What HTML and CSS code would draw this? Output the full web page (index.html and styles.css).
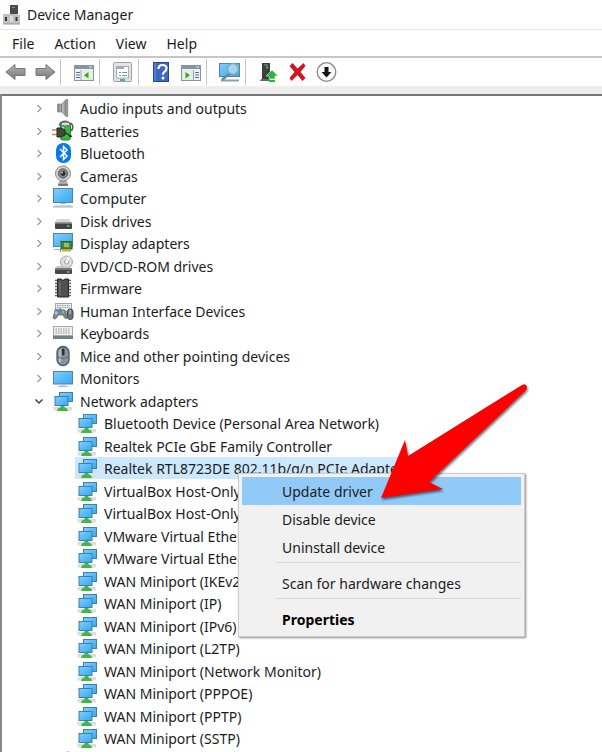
FILE: index.html
```html
<!DOCTYPE html>
<html lang="en">
<head>
<meta charset="utf-8">
<title>Device Manager</title>
<link rel="stylesheet" href="styles.css">
</head>
<body>
<svg class="sprite" aria-hidden="true">
  <defs>
    <linearGradient id="screen" x1="0" y1="0" x2="1" y2="1"><stop offset="0" stop-color="#7fd0fb"/><stop offset="1" stop-color="#38a6f1"/></linearGradient>
    <linearGradient id="cone" x1="0" y1="0" x2="1" y2="0"><stop offset="0" stop-color="#777"/><stop offset=".5" stop-color="#c8c8c8"/><stop offset="1" stop-color="#777"/></linearGradient>
    <linearGradient id="arrow" x1="0" y1="0" x2="0" y2="1"><stop offset="0" stop-color="#b5b5b5"/><stop offset="1" stop-color="#777"/></linearGradient>
  </defs>
  <symbol id="i-chevron" viewBox="0 0 20 22"><path d="M8.500 8l3.500 3.500-3.500 3.500" fill="none" stroke="#a0a0a0" stroke-width="1.400"/></symbol>
  <symbol id="i-open" viewBox="0 0 20 22"><path d="M6.500 9.500l3.500 3.500 3.500-3.500" fill="none" stroke="#404040" stroke-width="1.500"/></symbol>
  <symbol id="i-audio" viewBox="0 0 24 22"><path d="M6.500 7h4l5-5v18l-5-5h-4z" fill="url(#cone)" stroke="#888" stroke-width=".7"/><path d="M10.500 7v8" stroke="#777"/><path d="M16.500 2v18" stroke="#999" stroke-width="1.500"/></symbol>
  <symbol id="i-battery" viewBox="0 0 24 22"><path d="M9 6c-1-5 7-6 9-3 4 0 5 5 2 8" fill="none" stroke="#526052" stroke-width="1.600"/><rect x="9.500" y="3" width="10" height="17" rx="2.500" fill="#35b842" stroke="#278032"/><ellipse cx="14.500" cy="4" rx="4.500" ry="2" fill="#d8ddd8" stroke="#667"/><path d="M12 7v7" stroke="#a7eca4" stroke-width="2"/><path d="M1 10h6M1 14.500h6" stroke="#b29748" stroke-width="1.600"/><path d="M6 8h4l4 2v5l-4 2H6z" fill="#45453e" stroke="#222"/><path d="M14 13c5 0 3 5 7 3" fill="none" stroke="#333" stroke-width="1.500"/></symbol>
  <symbol id="i-bluetooth" viewBox="0 0 24 22"><rect x="5" y="1" width="15" height="20" rx="7" fill="#087ce5"/><path d="M9 7l7 7-3.500 3.500v-13L16 8l-7 7" fill="none" stroke="#fff" stroke-width="1.500"/></symbol>
  <symbol id="i-camera" viewBox="0 0 24 22"><path d="M9 15h6l2 4q0 2-5 2t-5-2z" fill="#a9a9a9"/><path d="M7 20h10" stroke="#666" stroke-width="1.500"/><circle cx="12" cy="8.500" r="7.500" fill="#d2d2d2" stroke="#888"/><circle cx="12" cy="8.500" r="4.700" fill="#858585" stroke="#606060"/><circle cx="12" cy="8.500" r="2.400" fill="#252a33"/><circle cx="11" cy="7.500" r="1" fill="#b6cde9"/></symbol>
  <symbol id="i-computer" viewBox="0 0 24 22"><rect x="2.500" y="1.500" width="19" height="14" fill="url(#screen)" stroke="#4c87a8"/><path d="M9 16h6v1H9z" fill="#9cc6dd"/><path d="M4 18h16l2 2H2z" fill="#cdd6dc"/><path d="M2 20h20" stroke="#a3b0b9"/></symbol>
  <symbol id="i-disk" viewBox="0 0 24 22"><path d="M6 9h12l3 4H3z" fill="#d6d6d6"/><rect x="4" y="12.500" width="17" height="6.500" rx="1" fill="#444"/><path d="M4 13h17" stroke="#aaa"/><path d="M16 16h2.500" stroke="#43e24c" stroke-width="1.500"/></symbol>
  <symbol id="i-display" viewBox="0 0 24 22"><rect x="2.500" y="1.500" width="19" height="13" fill="url(#screen)" stroke="#4c87a8"/><path d="M4 17h6v1H2z" fill="#9eafba"/><rect x="10" y="9.500" width="11" height="7.500" fill="#338d47" stroke="#246638"/><rect x="13" y="11" width="5" height="4" fill="#b2b64d"/><path d="M11 18.500h9" stroke="#d2a92e" stroke-width="2"/><path d="M9.500 8v12" stroke="#888"/></symbol>
  <symbol id="i-dvd" viewBox="0 0 24 22"><circle cx="15.500" cy="7" r="6" fill="#dedede" stroke="#aaa"/><circle cx="15.500" cy="7" r="2" fill="#fff" stroke="#999"/><path d="M18 2l-2 4" stroke="#fff" stroke-width="2"/><path d="M6 11h12l3 3H3z" fill="#c7c7c7"/><rect x="4" y="13" width="17" height="6" rx="1" fill="#484848"/><path d="M4 14h17" stroke="#aaa"/><path d="M16 17h2.500" stroke="#43e24c" stroke-width="1.500"/></symbol>
  <symbol id="i-firmware" viewBox="0 0 24 22"><path d="M4 3.500h16M4 6.500h16M4 9.500h16M4 12.500h16M4 15.500h16M4 18.500h16" stroke="#666" stroke-width="1.500"/><path d="M6.500 2h3.500q2 3 4 0h3.500v18h-11z" fill="#505050" stroke="#292929"/><path d="M9 5v13" stroke="#777"/></symbol>
  <symbol id="i-hid" viewBox="0 0 24 22"><rect x="4.500" y="3.500" width="16" height="8" fill="#e9ecee" stroke="#a2a9ad"/><path d="M6 5.500h13M6 7.500h13" stroke="#999" stroke-dasharray="1.500 1"/><path d="M4 10q1-1 3 0h4q3-1 4 2l1 6q-2 2-4-3H7q-2 6-5 3z" fill="#7b858d" stroke="#586169" stroke-width=".7"/><rect x="16.500" y="9" width="5.500" height="10.500" rx="2.700" fill="#687580" stroke="#3d4850"/><path d="M5 11v4M3.500 13h3.500" stroke="#cedae2"/><circle cx="9" cy="10" r="1.700" fill="#318fe3"/><circle cx="12" cy="12" r="1.300" fill="#e3a33b"/><path d="M19 10v4" stroke="#c6d5e0"/></symbol>
  <symbol id="i-keyboard" viewBox="0 0 24 22"><rect x="2.500" y="4.500" width="19" height="9" fill="#eeefef" stroke="#a5a9ac"/><path d="M4.500 7h15M4.500 9h15M4.500 11h15" stroke="#999" stroke-dasharray="1.500 1"/><path d="M2 14h20v3H2z" fill="#777e82"/></symbol>
  <symbol id="i-mouse" viewBox="0 0 24 22"><rect x="6" y="1.500" width="12" height="19" rx="6" fill="#8994a0" stroke="#4c5660" stroke-width="1.300"/><path d="M9 5v12" stroke="#c1cbd4" stroke-width="1.500"/><rect x="11" y="3.500" width="2.500" height="7" rx="1" fill="#26313c"/><path d="M7 12q5 3 10 0" fill="none" stroke="#626e79"/></symbol>
  <symbol id="i-monitor" viewBox="0 0 24 22"><rect x="2.500" y="4.500" width="19" height="12.500" fill="url(#screen)" stroke="#4c87a8"/><path d="M9 17.500h6v1H9z" fill="#8abbd5"/><path d="M7 19.500h10" stroke="#a6bac5"/></symbol>
  <symbol id="i-net" viewBox="0 0 24 22"><rect x="8.500" y="2.500" width="13" height="9" fill="url(#screen)" stroke="#3f80ab"/><rect x="2.500" y="17" width="18.500" height="3.500" fill="#dedede"/><path d="M9.500 16h4v1.500q3 0 3.500 3.500H6q.5-3.500 3.500-3.500z" fill="#43b64b"/><rect x="4" y="6.500" width="13" height="9" fill="url(#screen)" stroke="#3f80ab"/></symbol>
  <symbol id="i-port" viewBox="0 0 24 22"><path d="M3 2h8v5H3zM13 4q4-5 8 0v4h-8z" fill="#777"/></symbol>
</svg>

<header class="titlebar">
  <svg class="app-icon" viewBox="0 0 20 22" aria-hidden="true"><rect x="8" y="1" width="8" height="9" fill="#444d49"/><path d="M10 3.500h3" stroke="#81938a"/><path d="M2 10h11l5 1v9H1v-9z" fill="#c0c0c0"/><path d="M1 20h17" stroke="#999"/><path d="M4 13v4M14.500 13v4" stroke="#333" stroke-width="2"/><path d="M8 12h3v6H8z" fill="#ddd"/></svg>
  <h1>Device Manager</h1>
</header>
<nav class="menubar" aria-label="Main menu">
  <button>File</button><button>Action</button><button>View</button><button>Help</button>
</nav>
<div class="toolbar" role="toolbar" aria-label="Tools">
  <button aria-label="Back"><svg viewBox="0 0 24 24"><path d="M2 12l9-7.500v4h10v7H11v4z" fill="url(#arrow)" stroke="#777"/></svg></button>
  <button aria-label="Forward"><svg viewBox="0 0 24 24"><path d="M22 12l-9-7.500v4H3v7h10v4z" fill="url(#arrow)" stroke="#777"/></svg></button>
  <i></i>
  <button aria-label="Show console tree"><svg viewBox="0 0 24 24"><rect x="2.500" y="5.500" width="19" height="15" fill="#f2f2f2" stroke="#8795a2"/><path d="M3 7.500h18" stroke="#8495a5" stroke-width="3"/><path d="M17 7h3" stroke="#dce7ef"/><path d="M9 10v10" stroke="#9ba6b1"/><path d="M4 12.500h4M4 15h4M4 17.500h4" stroke="#447ab3"/><path d="M11 10h10v10H11z" fill="#e6eee4"/><path d="M16.500 12v6.500l-4.500-3.200z" fill="#38a62a"/></svg></button>
  <i></i>
  <button aria-label="Properties"><svg viewBox="0 0 24 24"><rect x="2.500" y="2.500" width="18" height="19" rx="1" fill="#e3e3e3" stroke="#a0a0a0"/><rect x="5.500" y="6.500" width="12" height="11.500" fill="#fff" stroke="#aaaeb2"/><path d="M5 8h8" stroke="#9cabba" stroke-width="2"/><path d="M8 12.500h2m1 0h5m-8 3h2m1 0h5" stroke="#8295a7"/><path d="M9 20h5" stroke="#28b4d4" stroke-width="2"/></svg></button>
  <i></i>
  <button aria-label="Help"><svg viewBox="0 0 24 24"><rect x="3.500" y="2.500" width="15" height="19" fill="#3f66c4" stroke="#2c448c"/><path d="M5 3v18" stroke="#7396df"/><path d="M8.500 9q0-4 4-4t4 3.500q0 2-2 3.200-1.500 1-1.500 3" fill="none" stroke="#fff" stroke-width="2.200"/><circle cx="13" cy="18" r="1.500" fill="#fff"/></svg></button>
  <button aria-label="Show action pane"><svg viewBox="0 0 24 24"><rect x="2.500" y="5.500" width="19" height="15" fill="#f2f2f2" stroke="#8795a2"/><path d="M3 7.500h18" stroke="#8495a5" stroke-width="3"/><path d="M17 7h3" stroke="#dce7ef"/><path d="M3 10h11v10H3z" fill="#e6eee4"/><path d="M14.500 10v10" stroke="#9ba6b1"/><path d="M16 12.500h4M16 15h4M16 17.500h4" stroke="#447ab3"/><path d="M6.500 12v6.500l4.500-3.200z" fill="#38a62a"/></svg></button>
  <i></i>
  <button aria-label="Scan for hardware changes"><svg viewBox="0 0 24 24"><rect x="1.500" y="3.500" width="20" height="13" fill="url(#screen)" stroke="#4c87a8"/><path d="M3 20.500h18" stroke="#8da1ad" stroke-width="2"/><path d="M12 13l-8 7" stroke="#6f8796" stroke-width="2.500"/><circle cx="15" cy="9" r="5.500" fill="#b8dff3" fill-opacity=".75" stroke="#84a6b8" stroke-width="1.500"/></svg></button>
  <i></i>
  <button aria-label="Update driver"><svg viewBox="0 0 24 24"><path d="M5 3h8v16H5z" fill="#3a403f"/><path d="M4 19h9v2H3z" fill="#666"/><path d="M7 5h4" stroke="#8d9692"/><circle cx="10" cy="7.500" r="1" fill="#50df50"/><path d="M9 16l6-6 6 6h-3v3h-6v-3z" fill="#24ba37" stroke="#fff" stroke-width=".5"/><path d="M12 21h6" stroke="#24ba37" stroke-width="2"/></svg></button>
  <button aria-label="Uninstall device"><svg viewBox="0 0 24 24"><path d="M3.500 6l3-3 5 5.500 6-5.500 2 3-5 6 5 6-3 3-5-6-6 6-2-3 5-6z" fill="#cf1723"/></svg></button>
  <button aria-label="Disable device"><svg viewBox="0 0 24 24"><circle cx="11.500" cy="12" r="9.300" fill="#fafafa" stroke="#888" stroke-width="1.300"/><path d="M9.500 7h4v5h3l-5 5.500L6.500 12h3z" fill="#151515"/></svg></button>
</div>

<main class="pane">
  <ul class="tree" role="tree" aria-label="Devices">
    <li role="treeitem"><svg class="twist"><use href="#i-chevron"/></svg><svg class="icon"><use href="#i-audio"/></svg><span>Audio inputs and outputs</span></li>
    <li role="treeitem"><svg class="twist"><use href="#i-chevron"/></svg><svg class="icon"><use href="#i-battery"/></svg><span>Batteries</span></li>
    <li role="treeitem"><svg class="twist"><use href="#i-chevron"/></svg><svg class="icon"><use href="#i-bluetooth"/></svg><span>Bluetooth</span></li>
    <li role="treeitem"><svg class="twist"><use href="#i-chevron"/></svg><svg class="icon"><use href="#i-camera"/></svg><span>Cameras</span></li>
    <li role="treeitem"><svg class="twist"><use href="#i-chevron"/></svg><svg class="icon"><use href="#i-computer"/></svg><span>Computer</span></li>
    <li role="treeitem"><svg class="twist"><use href="#i-chevron"/></svg><svg class="icon"><use href="#i-disk"/></svg><span>Disk drives</span></li>
    <li role="treeitem"><svg class="twist"><use href="#i-chevron"/></svg><svg class="icon"><use href="#i-display"/></svg><span>Display adapters</span></li>
    <li role="treeitem"><svg class="twist"><use href="#i-chevron"/></svg><svg class="icon"><use href="#i-dvd"/></svg><span>DVD/CD-ROM drives</span></li>
    <li role="treeitem"><svg class="twist"><use href="#i-chevron"/></svg><svg class="icon"><use href="#i-firmware"/></svg><span>Firmware</span></li>
    <li role="treeitem"><svg class="twist"><use href="#i-chevron"/></svg><svg class="icon"><use href="#i-hid"/></svg><span>Human Interface Devices</span></li>
    <li role="treeitem"><svg class="twist"><use href="#i-chevron"/></svg><svg class="icon"><use href="#i-keyboard"/></svg><span>Keyboards</span></li>
    <li role="treeitem"><svg class="twist"><use href="#i-chevron"/></svg><svg class="icon"><use href="#i-mouse"/></svg><span>Mice and other pointing devices</span></li>
    <li role="treeitem"><svg class="twist"><use href="#i-chevron"/></svg><svg class="icon"><use href="#i-monitor"/></svg><span>Monitors</span></li>
    <li role="treeitem" aria-expanded="true"><svg class="twist"><use href="#i-open"/></svg><svg class="icon"><use href="#i-net"/></svg><span>Network adapters</span></li>
    <li class="child" role="treeitem" aria-level="2"><svg class="icon"><use href="#i-net"/></svg><span>Bluetooth Device (Personal Area Network)</span></li>
    <li class="child" role="treeitem" aria-level="2"><svg class="icon"><use href="#i-net"/></svg><span>Realtek PCIe GbE Family Controller</span></li>
    <li class="child selected" role="treeitem" aria-level="2" aria-selected="true"><svg class="icon"><use href="#i-net"/></svg><span>Realtek RTL8723DE 802.11b/g/n PCIe Adapter</span></li>
    <li class="child" role="treeitem" aria-level="2"><svg class="icon"><use href="#i-net"/></svg><span>VirtualBox Host-Only</span></li>
    <li class="child" role="treeitem" aria-level="2"><svg class="icon"><use href="#i-net"/></svg><span>VirtualBox Host-Only</span></li>
    <li class="child" role="treeitem" aria-level="2"><svg class="icon"><use href="#i-net"/></svg><span>VMware Virtual Ether</span></li>
    <li class="child" role="treeitem" aria-level="2"><svg class="icon"><use href="#i-net"/></svg><span>VMware Virtual Ether</span></li>
    <li class="child" role="treeitem" aria-level="2"><svg class="icon"><use href="#i-net"/></svg><span>WAN Miniport (IKEv2)</span></li>
    <li class="child" role="treeitem" aria-level="2"><svg class="icon"><use href="#i-net"/></svg><span>WAN Miniport (IP)</span></li>
    <li class="child" role="treeitem" aria-level="2"><svg class="icon"><use href="#i-net"/></svg><span>WAN Miniport (IPv6)</span></li>
    <li class="child" role="treeitem" aria-level="2"><svg class="icon"><use href="#i-net"/></svg><span>WAN Miniport (L2TP)</span></li>
    <li class="child" role="treeitem" aria-level="2"><svg class="icon"><use href="#i-net"/></svg><span>WAN Miniport (Network Monitor)</span></li>
    <li class="child" role="treeitem" aria-level="2"><svg class="icon"><use href="#i-net"/></svg><span>WAN Miniport (PPPOE)</span></li>
    <li class="child" role="treeitem" aria-level="2"><svg class="icon"><use href="#i-net"/></svg><span>WAN Miniport (PPTP)</span></li>
    <li class="child" role="treeitem" aria-level="2"><svg class="icon"><use href="#i-net"/></svg><span>WAN Miniport (SSTP)</span></li>
    <li role="treeitem" aria-label="Ports"><svg class="twist"></svg><svg class="icon"><use href="#i-port"/></svg></li>
  </ul>

  <div class="context" role="menu">
    <button class="active" role="menuitem">Update driver</button>
    <button role="menuitem">Disable device</button>
    <button role="menuitem">Uninstall device</button>
    <hr>
    <button role="menuitem">Scan for hardware changes</button>
    <hr>
    <button class="default" role="menuitem">Properties</button>
  </div>
  <svg class="pointer" viewBox="370 370 170 140" aria-hidden="true"><path d="M381 498L405 440l3 16L522 385q4-2 5 2 0 2-2 4L429 482l14 7z" fill="#f00"/></svg>
</main>
</body>
</html>
```

FILE: styles.css
```css
* { box-sizing: border-box; }

body {
  margin: 0;
  height: 100vh;
  overflow: hidden;
  display: flex;
  flex-direction: column;
  background: #fff;
  color: #1c1c1c;
  font: 14px/22px "Noto Sans", "Open Sans", sans-serif;
}

button {
  border: 0;
  padding: 0;
  background: none;
  color: inherit;
  font: inherit;
}

.sprite { position: absolute; width: 0; height: 0; }

.titlebar {
  display: flex;
  align-items: center;
  gap: 5px;
  height: 29px;
  padding-left: 2px;
}
.titlebar h1 { margin: 0; font-size: 14px; font-weight: 400; }
.app-icon { width: 20px; height: 22px; }

.menubar {
  display: flex;
  gap: 20px;
  height: 29px;
  padding: 2px 0 0 12px;
  border-top: 1px solid #e6e6e6;
  border-bottom: 2px solid #c6c6c6;
}

.toolbar {
  display: flex;
  align-items: center;
  height: 28px;
  padding-left: 1px;
}
.toolbar button { display: grid; place-items: center; width: 29px; height: 26px; }
.toolbar svg { width: 24px; height: 24px; }
.toolbar i { width: 1px; height: 26px; margin: 0 8px 0 1px; background: #c4c4c4; }

.pane {
  position: relative;
  flex: 1;
  min-height: 0;
  border-top: 8px solid #eee;
}
.tree {
  display: grid;
  grid-auto-rows: 22px 23px;
  height: 100%;
  margin: 0;
  padding: 1px 0 0;
  overflow: hidden;
  list-style: none;
  border-top: 2px solid #777;
  border-left: 2px solid #888;
}
.tree li {
  display: flex;
  align-items: center;
  justify-self: start;
  gap: 5px;
  height: 100%;
  padding-left: 27px;
  white-space: nowrap;
}
.tree span { padding-top: 2px; }
.tree .child { margin-left: 73px; padding: 0 5px 0 0; }
.tree .selected { background: #cce8ff; }
.twist { width: 20px; height: 22px; margin-right: -3px; }
.icon { width: 24px; height: 22px; }

.context {
  position: absolute;
  top: 379px;
  left: 238px;
  width: 287px;
  padding: 3px;
  background: #f1f1f1;
  border: 1px solid #ccc;
  box-shadow: 1px 1px 2px #888;
}
.context button {
  display: block;
  width: 100%;
  height: 28px;
  padding: 2px 0 0 40px;
  text-align: left;
}
.context .active { background: #91c9f7; }
.context .default { color: #000; font-weight: 700; }
.context hr {
  margin: 1px 0 6px 34px;
  border: 0;
  border-top: 1px solid #d8d8d8;
}

.pointer {
  position: absolute;
  top: 276px;
  left: 370px;
  width: 170px;
  height: 140px;
  filter: drop-shadow(1px 2px 1px #0008);
  pointer-events: none;
}
```
